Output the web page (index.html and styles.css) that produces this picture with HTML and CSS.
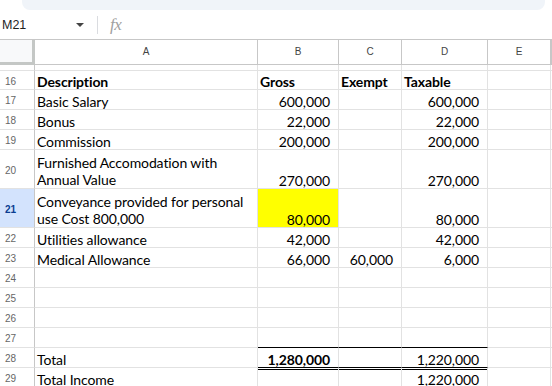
FILE: index.html
```html
<!DOCTYPE html>
<html lang="en">
<head>
  <meta charset="UTF-8" />
  <title>Income Sheet</title>
  <link rel="stylesheet" href="styles.css">
</head>
<body>

  <div class="topbar"></div>

  <div class="formula-bar">
    <span class="name-box">M21</span>
    <span class="caret"></span>
    <span class="sep"></span>
    <span class="fx">fx</span>
  </div>

  <div class="sheet">
    <div class="row col-heads">
      <div class="corner"></div>
      <div>A</div>
      <div>B</div>
      <div>C</div>
      <div>D</div>
      <div>E</div>
      <div></div>
    </div>

    <div class="row spacer">
      <div class="rh"></div><div></div><div></div><div></div><div></div><div></div><div></div>
    </div>

    <div class="row first">
      <div class="rh">16</div>
      <div class="b">Description</div>
      <div class="b">Gross</div>
      <div class="b">Exempt</div>
      <div class="b">Taxable</div>
      <div></div><div></div>
    </div>

    <div class="row">
      <div class="rh">17</div>
      <div>Basic Salary</div>
      <div class="num">600,000</div>
      <div></div>
      <div class="num">600,000</div>
      <div></div><div></div>
    </div>

    <div class="row">
      <div class="rh">18</div>
      <div>Bonus</div>
      <div class="num">22,000</div>
      <div></div>
      <div class="num">22,000</div>
      <div></div><div></div>
    </div>

    <div class="row">
      <div class="rh">19</div>
      <div>Commission</div>
      <div class="num">200,000</div>
      <div></div>
      <div class="num">200,000</div>
      <div></div><div></div>
    </div>

    <div class="row tall">
      <div class="rh">20</div>
      <div class="wrap">Furnished Accomodation with Annual Value</div>
      <div class="num">270,000</div>
      <div></div>
      <div class="num">270,000</div>
      <div></div><div></div>
    </div>

    <div class="row tall">
      <div class="rh active">21</div>
      <div class="wrap">Conveyance provided for personal use Cost 800,000</div>
      <div class="num yellow">80,000</div>
      <div></div>
      <div class="num">80,000</div>
      <div></div><div></div>
    </div>

    <div class="row">
      <div class="rh">22</div>
      <div>Utilities allowance</div>
      <div class="num">42,000</div>
      <div></div>
      <div class="num">42,000</div>
      <div></div><div></div>
    </div>

    <div class="row">
      <div class="rh">23</div>
      <div>Medical Allowance</div>
      <div class="num">66,000</div>
      <div class="num">60,000</div>
      <div class="num">6,000</div>
      <div></div><div></div>
    </div>

    <div class="row">
      <div class="rh">24</div>
      <div></div><div></div><div></div><div></div><div></div><div></div>
    </div>

    <div class="row">
      <div class="rh">25</div>
      <div></div><div></div><div></div><div></div><div></div><div></div>
    </div>

    <div class="row">
      <div class="rh">26</div>
      <div></div><div></div><div></div><div></div><div></div><div></div>
    </div>

    <div class="row">
      <div class="rh">27</div>
      <div></div>
      <div class="line-under"></div>
      <div class="line-under"></div>
      <div class="line-under"></div>
      <div></div><div></div>
    </div>

    <div class="row">
      <div class="rh">28</div>
      <div>Total</div>
      <div class="num b line-under">1,280,000</div>
      <div class="line-under"></div>
      <div class="num line-under">1,220,000</div>
      <div></div><div></div>
    </div>

    <div class="row">
      <div class="rh">29</div>
      <div>Total Income</div>
      <div class="double-top"></div>
      <div class="double-top"></div>
      <div class="num double-top">1,220,000</div>
      <div></div><div></div>
    </div>
  </div>

</body>
</html>
```

FILE: styles.css
```css
* {
  margin: 0;
  padding: 0;
  box-sizing: border-box;
}

body {
  background-color: white;
  font-family: Lato, 'Liberation Sans', sans-serif;
  overflow: hidden;
}

.topbar {
  height: 10px;
  margin: 0 7px 0 22px;
  background-color: #f0f4f9;
  border-radius: 0 0 8px 8px;
}

.formula-bar {
  height: 30px;
  display: flex;
  align-items: center;
  border-bottom: 1px solid #c7c7c7;
  font-family: 'Liberation Sans', Arial, sans-serif;
}

.name-box {
  width: 76px;
  padding-left: 2px;
  font-size: 12.5px;
  color: #1f1f1f;
}

.caret {
  width: 0;
  height: 0;
  border-left: 4px solid transparent;
  border-right: 4px solid transparent;
  border-top: 4px solid #444;
  margin-top: 1px;
}

.sep {
  width: 1px;
  height: 18px;
  background-color: #dadce0;
  margin: 0 12px 0 13px;
}

.fx {
  font-family: 'Liberation Serif', serif;
  font-style: italic;
  font-size: 17px;
  color: #a0a0a0;
  letter-spacing: -0.5px;
}

.row {
  display: grid;
  grid-template-columns: 35px 223px 81px 63px 86px 63px 1fr;
  height: 20px;
}

.row > div {
  border-right: 1px solid #e2e2e2;
  border-bottom: 1px solid #e2e2e2;
  display: flex;
  align-items: flex-end;
  padding: 0 3px 0 2px;
  font-size: 14px;
  line-height: 15px;
  letter-spacing: -0.1px;
  color: #000;
  white-space: nowrap;
  overflow: hidden;
}

.col-heads {
  height: 25px;
}

.col-heads > div {
  border-right-color: #c7c7c7;
  border-bottom-color: #c7c7c7;
  align-items: center;
  justify-content: center;
  padding: 0 0 2px 0;
  font-family: 'Liberation Sans', Arial, sans-serif;
  font-size: 10px;
  letter-spacing: 0;
  color: #444;
}

.col-heads .corner {
  background-color: #f8f9fa;
  border-right: 3px solid #c4c7c5;
  border-bottom: 3px solid #c4c7c5;
}

.spacer {
  height: 6px;
}

.first {
  height: 19px;
}

.tall {
  height: 39px;
}

.row > .rh {
  border-right-color: #c7c7c7;
  align-items: center;
  padding: 2px 0 0 5px;
  font-family: 'Liberation Sans', Arial, sans-serif;
  font-size: 10px;
  letter-spacing: 0;
  color: #666;
}

.row > .rh.active {
  background-color: #d3e3fd;
  color: #0b3d91;
  font-weight: bold;
}

.row > .wrap {
  white-space: normal;
  line-height: 16.5px;
  padding-bottom: 0;
}

.row > .num {
  justify-content: flex-end;
  padding-right: 8px;
}

.row > .b {
  font-weight: bold;
}

.row > .yellow {
  background-color: #ffff00;
}

.row > .line-under {
  border-bottom-color: #000;
}

.row > .double-top {
  box-shadow: inset 0 1px 0 #fff, inset 0 2px 0 #000;
}
```
